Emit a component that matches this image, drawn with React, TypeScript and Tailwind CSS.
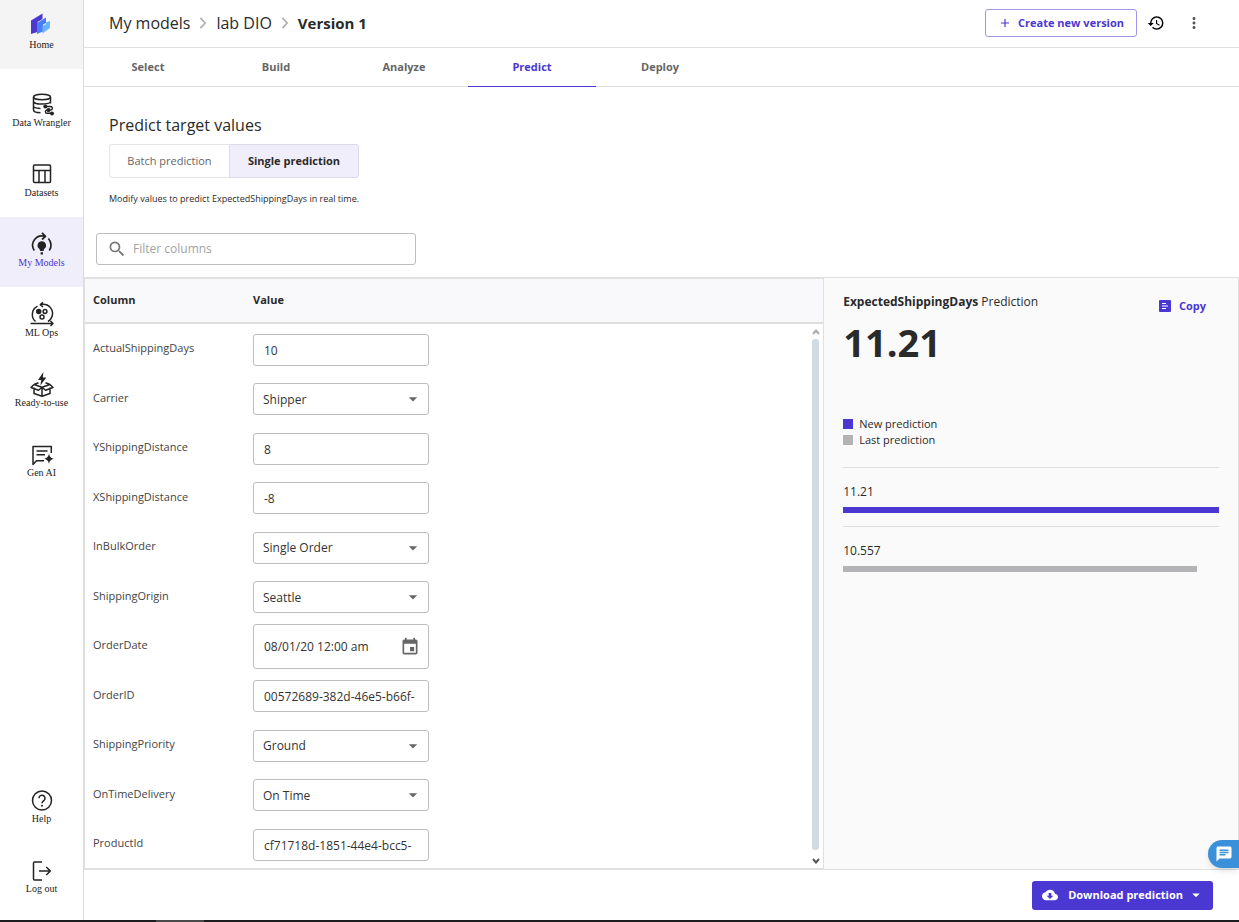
import { useState, type ReactNode } from "react";
import {
  MdAdd,
  MdArrowDropDown,
  MdChat,
  MdCloudDownload,
  MdEvent,
  MdHistory,
  MdMoreVert,
  MdSearch,
} from "react-icons/md";

function HomeLogo() {
  return (
    <svg viewBox="0 0 24 24" className="size-6" aria-hidden="true">
      <path d="M1 8.500 12.500 1.500V7L7.500 10v10L1 22z" fill="#4b39cf" />
      <path d="M7 11 16 5.500v5.500L13 12.500v7L7 22z" fill="#4a7cf6" />
      <path d="M12.500 14 16 12V10.500l4-1.500v7l-7.500 5.500z" fill="#6cb4ff" />
    </svg>
  );
}

function StrokeIcon({ children }: { children: ReactNode }) {
  return (
    <svg
      viewBox="0 0 24 24"
      className="size-6 overflow-visible"
      fill="none"
      stroke="currentColor"
      strokeWidth="1.500"
      strokeLinejoin="round"
      aria-hidden="true"
    >
      {children}
    </svg>
  );
}

function WranglerIcon() {
  return (
    <StrokeIcon>
      <ellipse cx="12" cy="4" rx="8.500" ry="2.800" />
      <path d="M3.500 4v13c0 1.500 3 2.600 7 2.800M20.500 4v6.500M3.500 8.500c0 1.500 4 2.600 8.500 2.600 3.500 0 6.500-.6 8-1.600M3.500 13.300c0 1.200 3 2 7 2.200" />
      <path d="M15 13.500h5.500a1.800 1.800 0 0 1 0 3.600H17a1.500 1.500 0 0 0 0 3.200h5" strokeWidth="1.400" />
      <circle cx="15.300" cy="13.500" r="1.300" fill="currentColor" />
      <circle cx="18.500" cy="17.100" r="1.300" fill="currentColor" />
      <circle cx="22" cy="20.500" r="1.200" fill="currentColor" />
    </StrokeIcon>
  );
}

function DatasetsIcon() {
  return (
    <StrokeIcon>
      <rect x="3.500" y="2" width="17" height="17.500" rx="1" />
      <path d="M3.500 7.500h17M9 7.500v12M15 7.500v12" />
    </StrokeIcon>
  );
}

function ModelsIcon() {
  return (
    <StrokeIcon>
      <path d="M4.300 17.500A9.300 9.300 0 0 1 14.500 3.300M12 -.2l3.500 3.500L12 6.500M18.300 5.500a9.300 9.300 0 0 1 1 12" strokeWidth="1.700" />
      <path
        d="M11.800 8.200a4.300 4.300 0 0 0-2.300 7.900l.6 1.900h3.400l.6-1.900a4.300 4.300 0 0 0-2.300-7.900zM10.600 19.300h2.400v2.200h-2.400z"
        fill="currentColor"
        stroke="none"
      />
    </StrokeIcon>
  );
}

function MlOpsIcon() {
  return (
    <StrokeIcon>
      <path d="M5.500 18.500A9.300 9.300 0 0 1 7.500 3.200M10.500 1.600A9.300 9.300 0 0 1 18 18.500M0.500 20.500h22.500M20.500 18l2.500 2.500-2.500 2.500M13-.7 10.300 1.600 13 4" />
      <circle cx="8.700" cy="8.500" r="2" fill="currentColor" />
      <circle cx="15" cy="8.500" r="1.900" />
      <circle cx="12" cy="14" r="2" />
    </StrokeIcon>
  );
}

function ReadyIcon() {
  return (
    <StrokeIcon>
      <path d="M4 14.500v6l8 2.800 8-2.800v-6M12 14.500v8.500M4 11.500l8 2.700 8-2.700M4 11.500l-3 3 7.500 2.700 3.500-3M20 11.500l3 3-7.500 2.700-3.500-3M4 11.500l4.500-1.800M20 11.500l-4.500-1.800" />
      <path d="M13.500-1 8 7h3.300l-1 5.500 6-8h-3.500z" fill="currentColor" stroke="none" />
    </StrokeIcon>
  );
}

function GenAiIcon() {
  return (
    <StrokeIcon>
      <path d="M21.300 10V3.500H3v18l3.500-3.800H14M6.500 8h11M6.500 11.700h8.500" />
      <path d="M19 10.500c.8 3.500 1.700 4.400 5 5.300-3.300.9-4.200 1.800-5 5.200-.8-3.400-1.700-4.300-5-5.200 3.300-.9 4.200-1.800 5-5.300z" fill="currentColor" stroke="none" />
    </StrokeIcon>
  );
}

function HelpIcon() {
  return (
    <StrokeIcon>
      <circle cx="12" cy="11.500" r="9.500" />
      <path d="M9 9.300a3 3 0 1 1 4.800 2.300c-1.100.8-1.800 1.300-1.800 2.700" />
      <circle cx="12" cy="16.700" r="1" fill="currentColor" stroke="none" />
    </StrokeIcon>
  );
}

function LogoutIcon() {
  return (
    <StrokeIcon>
      <path d="M12 3H4.500Q3.500 3 3.500 4v16q0 1 1 1H12M9 12h11M16.300 8l4 4-4 4" />
    </StrokeIcon>
  );
}

function Chevron() {
  return (
    <svg viewBox="0 0 8 14" className="h-3 w-2" fill="none" stroke="#b0b0b0" strokeWidth="2" aria-hidden="true">
      <path d="M1 1l5.500 6L1 13" />
    </svg>
  );
}

function CopyIcon() {
  return (
    <svg viewBox="0 0 12 12" className="size-3" aria-hidden="true">
      <rect width="12" height="12" rx="1" fill="#4b37d1" />
      <path d="M3 3.500h4M3 6h6M3 8.500h4" stroke="#fff" strokeWidth="1" />
    </svg>
  );
}

const navItems = [
  { label: "Data Wrangler", icon: <WranglerIcon /> },
  { label: "Datasets", icon: <DatasetsIcon /> },
  { label: "My Models", icon: <ModelsIcon />, active: true },
  { label: "ML Ops", icon: <MlOpsIcon /> },
  { label: "Ready-to-use", icon: <ReadyIcon /> },
  { label: "Gen AI", icon: <GenAiIcon /> },
];

const footerItems = [
  { label: "Help", icon: <HelpIcon /> },
  { label: "Log out", icon: <LogoutIcon /> },
];

function NavItem({ label, icon, active }: { label: string; icon: ReactNode; active?: boolean }) {
  return (
    <a
      href="#"
      className={`flex h-[70px] flex-col items-center justify-center pb-0.5 ${active ? "bg-[#f1eefb]" : ""}`}
    >
      {icon}
      <span className={`text-[10px] leading-3 ${active ? "text-[#4b37d1]" : ""}`}>{label}</span>
    </a>
  );
}

function Sidebar() {
  return (
    <nav className="flex w-21 shrink-0 flex-col border-r border-[#dcdcdc] pb-[7px] font-['Liberation_Serif',serif] text-[#232323]">
      <a href="#" className="mb-2 flex h-[69px] flex-col items-center gap-[3px] bg-[#f4f4f4] pt-3">
        <HomeLogo />
        <span className="text-[10px] leading-3">Home</span>
      </a>
      {navItems.map((item) => (
        <NavItem key={item.label} {...item} />
      ))}
      <div className="mt-auto">
        {footerItems.map((item) => (
          <NavItem key={item.label} {...item} />
        ))}
      </div>
    </nav>
  );
}

type Field = { name: string; kind: "text" | "select" | "date"; value: string };

const fields: Field[] = [
  { name: "ActualShippingDays", kind: "text", value: "10" },
  { name: "Carrier", kind: "select", value: "Shipper" },
  { name: "YShippingDistance", kind: "text", value: "8" },
  { name: "XShippingDistance", kind: "text", value: "-8" },
  { name: "InBulkOrder", kind: "select", value: "Single Order" },
  { name: "ShippingOrigin", kind: "select", value: "Seattle" },
  { name: "OrderDate", kind: "date", value: "08/01/20 12:00 am" },
  { name: "OrderID", kind: "text", value: "00572689-382d-46e5-b66f-" },
  { name: "ShippingPriority", kind: "select", value: "Ground" },
  { name: "OnTimeDelivery", kind: "select", value: "On Time" },
  { name: "ProductId", kind: "text", value: "cf71718d-1851-44e4-bcc5-" },
];

function FieldControl({ field }: { field: Field }) {
  if (field.kind === "select") {
    return (
      <div className="relative w-44">
        <select
          id={field.name}
          defaultValue={field.value}
          className="block h-8 w-full appearance-none rounded-[3px] border border-[#bdbdbd] bg-white px-[9px] pt-px text-[12px] text-[#333]"
        >
          <option>{field.value}</option>
        </select>
        <MdArrowDropDown className="pointer-events-none absolute top-1.5 right-1.5 size-5 text-[#666]" />
      </div>
    );
  }
  if (field.kind === "date") {
    return (
      <div className="flex h-[45px] w-44 items-center rounded-[3px] border border-[#bdbdbd] pr-2 pl-2.5">
        <input
          id={field.name}
          defaultValue={field.value}
          className="min-w-0 flex-1 text-[12px] text-[#333] outline-none"
        />
        <button type="button" aria-label="Choose date">
          <MdEvent className="size-5 text-[#666]" />
        </button>
      </div>
    );
  }
  return (
    <input
      id={field.name}
      defaultValue={field.value}
      className="block h-8 w-44 rounded-[3px] border border-[#bdbdbd] px-2.5 pt-px text-[12px] text-[#333]"
    />
  );
}

function ValuesTable() {
  return (
    <div className="relative min-w-0 flex-1 border-y-2 border-l border-[#e0e0e0]">
      <table className="w-full border-separate border-spacing-0 text-left text-[11px]">
        <thead>
          <tr className="bg-[#f9f9fb]">
            <th className="h-[45px] w-40 border-b-2 border-[#dedede] pl-2 font-bold">Column</th>
            <th className="h-[45px] border-b-2 border-[#dedede] pl-2 font-bold">Value</th>
          </tr>
        </thead>
        <tbody>
          {fields.map((field) => (
            <tr key={field.name} className="odd:h-[49px] even:h-[50px]">
              <td className="pl-2 text-[#444]">
                <label htmlFor={field.name}>{field.name}</label>
              </td>
              <td className="pt-0.5 pl-2">
                <FieldControl field={field} />
              </td>
            </tr>
          ))}
        </tbody>
      </table>
      <div className="absolute top-[46px] right-1 bottom-0 flex w-[7px] flex-col items-center gap-1 py-1" aria-hidden="true">
        <svg viewBox="0 0 8 6" className="h-1.5 w-2 shrink-0" fill="none" stroke="#aaa" strokeWidth="2">
          <path d="M1 5l3-3.500L7 5" />
        </svg>
        <div className="mb-1 w-full flex-1 rounded-[3px] bg-[#d1dbe4]" />
        <svg viewBox="0 0 8 6" className="h-1.5 w-2 shrink-0" fill="none" stroke="#555" strokeWidth="2">
          <path d="M1 1l3 3.500L7 1" />
        </svg>
      </div>
    </div>
  );
}

const predictions = [
  { value: "11.21", ratio: 1, color: "bg-[#4b37d1]" },
  { value: "10.557", ratio: 10.557 / 11.21, color: "bg-[#b4b4b6]" },
];

function PredictionPanel() {
  return (
    <section className="w-[36%] shrink-0 border border-[#e0e0e0] bg-[#fafafa] px-[19px] pt-3.5">
      <div className="flex items-start justify-between">
        <h2 className="text-[12px] leading-5">
          <b>ExpectedShippingDays</b> Prediction
        </h2>
        <button type="button" className="mt-1 mr-[13px] flex items-center gap-2 text-[11px] leading-5 font-bold text-[#4b37d1]">
          <CopyIcon />
          Copy
        </button>
      </div>
      <p className="mt-0.5 text-[38px] leading-12 font-bold">11.21</p>
      <ul className="mt-[50px] mb-[19px] text-[11px] leading-4">
        <li className="flex items-center gap-1.5">
          <span className="size-2.5 bg-[#4b37d1]" />
          New prediction
        </li>
        <li className="flex items-center gap-1.5">
          <span className="size-2.5 bg-[#b4b4b6]" />
          Last prediction
        </li>
      </ul>
      {predictions.map((p) => (
        <div key={p.value} className="border-t border-[#dedede] pt-3.5 pb-[13px]">
          <p className="text-[12px] leading-5">{p.value}</p>
          <div className={`mt-[5px] h-1.5 ${p.color}`} style={{ width: `${p.ratio * 100}%` }} />
        </div>
      ))}
    </section>
  );
}

const tabs = ["Select", "Build", "Analyze", "Predict", "Deploy"];

export default function App() {
  const [tab, setTab] = useState("Predict");
  const [mode, setMode] = useState("single");

  return (
    <div className="flex min-h-screen flex-col bg-white font-['Open_Sans',sans-serif] text-[#2a2a2a]">
      <div className="flex flex-1">
        <Sidebar />
        <main className="flex min-w-0 flex-1 flex-col">
          <header className="flex h-12 items-center border-b border-[#dedede] pr-9 pb-px pl-[25px]">
            <div className="flex flex-1 items-center gap-[9px] text-[16px]">
              <a href="#">My models</a>
              <Chevron />
              <a href="#">lab DIO</a>
              <Chevron />
              <b className="text-[15px]">Version 1</b>
            </div>
            <button
              type="button"
              className="flex h-7 items-center gap-1.5 rounded-[3px] border border-[#9f94e6] px-3 text-[11px] font-bold text-[#4b37d1]"
            >
              <MdAdd className="size-3.5" />
              Create new version
            </button>
            <button type="button" aria-label="History" className="ml-2.5">
              <MdHistory className="size-[18px] text-black" />
            </button>
            <button type="button" aria-label="More options" className="ml-5">
              <MdMoreVert className="size-[18px] text-[#555]" />
            </button>
          </header>

          <div className="flex h-[39px] border-b border-[#dedede]" role="tablist">
            {tabs.map((name) => (
              <button
                key={name}
                type="button"
                role="tab"
                aria-selected={tab === name}
                onClick={() => setTab(name)}
                className={`-mb-px w-32 border-b text-[11px] font-bold ${
                  tab === name ? "border-[#4b37d1] text-[#4b37d1]" : "border-transparent text-[#666]"
                }`}
              >
                {name}
              </button>
            ))}
          </div>

          <div className="px-[25px] pt-7">
            <h1 className="text-[16px] leading-5">Predict target values</h1>
            <div className="mt-[9px] flex h-[34px] text-[11px]">
              <button
                type="button"
                onClick={() => setMode("batch")}
                className={`w-[120px] rounded-l-[3px] border border-r-0 border-[#e6e6ea] ${
                  mode === "batch" ? "bg-[#f1eefb] font-bold" : "text-[#666]"
                }`}
              >
                Batch prediction
              </button>
              <button
                type="button"
                onClick={() => setMode("single")}
                className={`w-[130px] rounded-r-[3px] border border-[#dcd9ea] ${
                  mode === "single" ? "bg-[#f1eefb] font-bold" : "text-[#666]"
                }`}
              >
                Single prediction
              </button>
            </div>
            <p className="mt-[13px] text-[9px] leading-4">Modify values to predict ExpectedShippingDays in real time.</p>
          </div>

          <div className="px-3 pt-[26px] pb-3">
            <label className="flex h-8 w-80 items-center gap-1.5 rounded-[3px] border border-[#bdbdbd] pl-2.5">
              <MdSearch className="size-5 text-[#757575]" />
              <input
                aria-label="Filter columns"
                placeholder="Filter columns"
                className="min-w-0 flex-1 text-[12px] outline-none placeholder:text-[#a2a2a2]"
              />
            </label>
          </div>

          <div className="flex">
            <ValuesTable />
            <PredictionPanel />
          </div>

          <footer className="mt-auto flex h-[50px] items-center justify-end pr-[26px]">
            <button
              type="button"
              className="flex h-[29px] items-center rounded-[3px] bg-[#4b37d1] pr-2 pl-2.5 text-[11px] font-bold text-white"
            >
              <MdCloudDownload className="mr-2.5 size-4" />
              Download prediction
              <MdArrowDropDown className="ml-1 size-[18px]" />
            </button>
          </footer>
        </main>
      </div>

      <div className="flex h-0.5 bg-[#1d1d1f] pl-39">
        <div className="w-12 bg-[#4a4a4a]" />
      </div>

      <button
        type="button"
        aria-label="Open chat"
        className="fixed right-0 bottom-[54px] flex h-7 w-[31px] items-center rounded-l-full bg-[#3a91d9] pl-[7px] shadow-md"
      >
        <MdChat className="size-[18px] text-white" />
      </button>
    </div>
  );
}
